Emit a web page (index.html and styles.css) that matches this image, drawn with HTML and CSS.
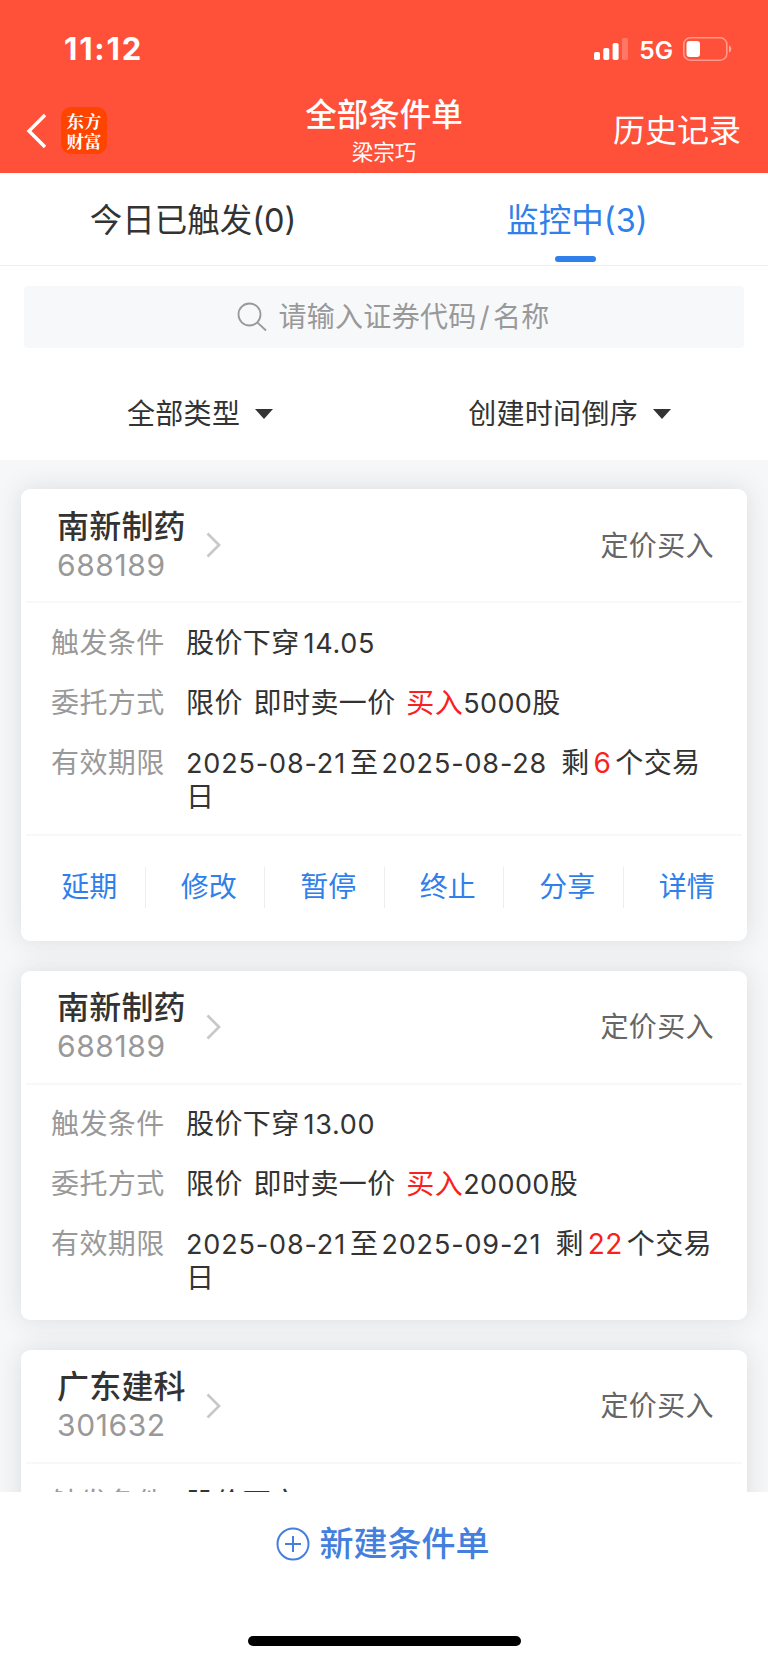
FILE: index.html
```html
<!DOCTYPE html>
<html lang="zh-CN">
<head>
<meta charset="utf-8">
<title>全部条件单</title>
<link rel="stylesheet" href="styles.css">
</head>
<body>
<div class="app">
  <header class="top">
    <div class="status">
      <span class="time">11:12</span>
      <span class="status-right">
        <svg class="signal" width="35" height="24" viewBox="0 0 35 24" fill="#fff"><rect x="0" y="15" width="6" height="8" rx="1.8"/><rect x="9.3" y="11" width="6" height="12" rx="1.8"/><rect x="18.6" y="6" width="6" height="17" rx="1.8"/><rect x="28" y="1" width="6" height="22" rx="1.8" opacity=".22"/></svg>
        <span class="net">5G</span>
        <svg class="battery" width="50" height="24" viewBox="0 0 50 24"><rect x=".8" y=".8" width="43" height="22.4" rx="6.5" fill="none" stroke="#fff" stroke-opacity=".42" stroke-width="1.6"/><rect x="3.5" y="4" width="13.5" height="16" rx="3.2" fill="#fff"/><path d="M46 8.500c3 1.200 3 5.800 0 7z" fill="#fff" fill-opacity=".5"/></svg>
      </span>
    </div>
    <div class="nav">
      <div class="nav-left">
        <svg width="20" height="36" viewBox="0 0 20 36" fill="none" stroke="#fff" stroke-width="3.400"><path d="M19 2 3 18 19 34"/></svg>
        <div class="logo"><span>东方</span><span>财富</span></div>
      </div>
      <div class="nav-title"><h1>全部条件单</h1><p>梁宗巧</p></div>
      <div class="history">历史记录</div>
    </div>
  </header>

  <nav class="tabs">
    <div class="tab">今日已触发(0)</div>
    <div class="tab active">监控中(3)</div>
  </nav>

  <div class="search">
    <svg width="30" height="30" viewBox="0 0 30 30" fill="none" stroke="#999" stroke-width="1.8"><circle cx="12.500" cy="12.500" r="11"/><path d="M20.300 20.300 29 28.500"/></svg>
    <span>请输入证券代码<i class="slash">/</i>名称</span>
  </div>

  <div class="filters">
    <div class="filter">全部类型<i class="caret"></i></div>
    <div class="filter sort">创建时间倒序<i class="caret"></i></div>
  </div>

  <main class="list">
    <section class="card">
      <div class="card-head">
        <div class="stock"><h2>南新制药</h2><p>688189</p></div>
        <svg class="arrow" width="16" height="26" viewBox="0 0 16 26" fill="none" stroke="#c8c8c8" stroke-width="2.700"><path d="M1.500 1.500 13 13 1.500 24.500"/></svg>
        <div class="kind">定价买入</div>
      </div>
      <dl class="rows">
        <div class="row"><dt>触发条件</dt><dd>股价下穿<span class="num price">14.05</span></dd></div>
        <div class="row"><dt>委托方式</dt><dd>限价 即时卖一价 <b>买入</b><span class="num">5000</span>股</dd></div>
        <div class="row"><dt>有效期限</dt><dd><span class="num date">2025-08-21</span>至<span class="num date second">2025-08-28</span><span class="left">剩<b class="days">6</b>个交易</span>日</dd></div>
      </dl>
      <div class="actions"><a>延期</a><a>修改</a><a>暂停</a><a>终止</a><a>分享</a><a>详情</a></div>
    </section>

    <section class="card">
      <div class="card-head">
        <div class="stock"><h2>南新制药</h2><p>688189</p></div>
        <svg class="arrow" width="16" height="26" viewBox="0 0 16 26" fill="none" stroke="#c8c8c8" stroke-width="2.700"><path d="M1.500 1.500 13 13 1.500 24.500"/></svg>
        <div class="kind">定价买入</div>
      </div>
      <dl class="rows">
        <div class="row"><dt>触发条件</dt><dd>股价下穿<span class="num price">13.00</span></dd></div>
        <div class="row"><dt>委托方式</dt><dd>限价 即时卖一价 <b>买入</b><span class="num">20000</span>股</dd></div>
        <div class="row"><dt>有效期限</dt><dd><span class="num date">2025-08-21</span>至<span class="num date second">2025-09-21</span><span class="left">剩<b class="days">22</b>个交易</span>日</dd></div>
      </dl>
    </section>

    <section class="card">
      <div class="card-head">
        <div class="stock"><h2>广东建科</h2><p>301632</p></div>
        <svg class="arrow" width="16" height="26" viewBox="0 0 16 26" fill="none" stroke="#c8c8c8" stroke-width="2.700"><path d="M1.500 1.500 13 13 1.500 24.500"/></svg>
        <div class="kind">定价买入</div>
      </div>
      <dl class="rows">
        <div class="row"><dt>触发条件</dt><dd>股价下穿<span class="num price">18.61</span></dd></div>
      </dl>
    </section>
  </main>

  <footer class="bottom">
    <div class="create">
      <svg width="34" height="34" viewBox="0 0 34 34" fill="none" stroke="#447fe0" stroke-width="2"><circle cx="17" cy="17" r="15.500"/><path d="M17 9v16M9 17h16"/></svg>
      <span>新建条件单</span>
    </div>
    <div class="home"></div>
  </footer>
</div>
</body>
</html>
```
FILE: styles.css
```css
* { box-sizing: border-box; margin: 0; padding: 0; }
body {
  font-family: Inter, "Noto Sans CJK SC", sans-serif;
  color: #333;
  background: #fff;
}
i { font-style: normal; }
.app { width: 768px; height: 1663px; display: flex; flex-direction: column; overflow: hidden; }

.top { height: 173px; flex: none; background: #ff513a; color: #fff; }
.status { height: 88px; padding: 28px 35px 0 64px; display: flex; justify-content: space-between; align-items: flex-start; }
.time { font-size: 31px; font-weight: 700; line-height: 42px; letter-spacing: 1.8px; }
.status-right { display: flex; align-items: center; height: 42px; }
.net { font-size: 24.500px; font-weight: 600; line-height: 42px; margin: 2px 10px 0 10px; }
.nav { height: 85px; display: grid; grid-template-columns: 1fr auto 1fr; padding: 0 27px 0 26px; }
.nav-left { display: flex; align-items: center; gap: 15px; }
.logo {
  width: 46px; height: 47px; border-radius: 10px; background: #ff4400;
  display: flex; flex-direction: column; align-items: center; justify-content: center;
  font-family: "Noto Serif CJK SC", "Noto Sans CJK SC", sans-serif;
  font-size: 17.500px; font-weight: 700; line-height: 19.500px;
}
.nav-title { text-align: center; padding-left: 1px; }
.nav-title h1 { font-size: 31.500px; font-weight: 500; line-height: 40px; margin-top: 7px; }
.nav-title p { font-size: 21.500px; line-height: 28px; margin-top: 3px; }
.history { justify-self: end; font-size: 32px; line-height: 85px; }

.tabs { height: 93px; flex: none; display: flex; border-bottom: 1px solid #eee; }
.tab { flex: 1; text-align: center; font-size: 32.500px; line-height: 96px; position: relative; padding-left: 2px; }
.tab.active { color: #2f80ea; }
.tab.active::after {
  content: ""; position: absolute; left: 50%; bottom: 3px; width: 41px; height: 6px;
  margin-left: -21px; border-radius: 3px; background: #2f80ea;
}

.search {
  height: 62px; flex: none; margin: 20px 24px 0; border-radius: 4px; background: #f7f8fa;
  display: flex; align-items: center; justify-content: center; gap: 11px;
  color: #999; font-size: 28px; line-height: 64px; letter-spacing: .3px; padding-left: 19px;
}
.slash { margin: 0 3px; }

.filters { height: 112px; flex: none; display: flex; justify-content: space-between; padding: 20px 97px 0 127px; }
.filter { display: flex; align-items: center; gap: 15px; font-size: 28px; line-height: 95px; letter-spacing: .3px; }
.caret { border: solid transparent; border-width: 10px 9.500px 0; border-top-color: #333; }

.list { flex: 1; overflow: hidden; background: #f6f7f9; padding: 29px 21px 0; display: flex; flex-direction: column; gap: 29.500px; }
.card { flex: none; background: #fff; border-radius: 9px; padding: 0 5px; box-shadow: 0 0 26px rgba(50, 50, 50, .13); }
.card-head { height: 114px; border-bottom: 2px solid #f8f8f8; display: flex; align-items: center; padding: 0 28px 0 31px; }
.stock { width: 149px; margin-top: -1px; }
.stock h2 { font-size: 32px; font-weight: 500; line-height: 40px; letter-spacing: .2px; }
.stock p { font-size: 30px; line-height: 36px; color: #999; letter-spacing: .6px; }
.arrow { flex: none; }
.kind { margin-left: auto; font-size: 28px; line-height: 40px; margin-top: 1px; letter-spacing: .4px; color: #666; }
.rows { padding: 22.500px 25px 20.500px; font-size: 28px; letter-spacing: .4px; }
.rows:last-child { padding-bottom: 25px; }
.row { display: flex; line-height: 34px; }
.row + .row { margin-top: 26px; }
.row dt { width: 135px; flex: none; color: #999; }
.row dd { flex: 1; white-space: nowrap; word-spacing: 2.500px; }
.row b { font-weight: 400; color: #fb2020; }
.row:last-child dd { white-space: normal; }
.left { white-space: nowrap; }
.num { font-size: 27px; line-height: 1; }
.price { margin-left: 4px; letter-spacing: .7px; }
.date { letter-spacing: .85px; }
.date:first-child { margin-right: 4px; }
.second { margin: 0 14px 0 3px; }
.row .days { margin: 0 4px; line-height: 1; }
.actions { border-top: 2px solid #f8f8f8; height: 107px; display: flex; }
.actions a { flex: 1; margin-top: 31px; height: 41px; line-height: 40px; padding-left: 8px; text-align: center; font-size: 28px; color: #2f80ea; }
.actions a + a { border-left: 1px solid #eee; }

.bottom { height: 171px; flex: none; background: #fff; display: flex; flex-direction: column; align-items: center; justify-content: space-between; padding: 27px 0 17px; }
.create { display: flex; align-items: center; gap: 10px; padding-right: 3px; color: #447fe0; font-size: 34px; font-weight: 500; line-height: 50px; }
.home { width: 273px; height: 10px; border-radius: 5px; background: #000; }
```
